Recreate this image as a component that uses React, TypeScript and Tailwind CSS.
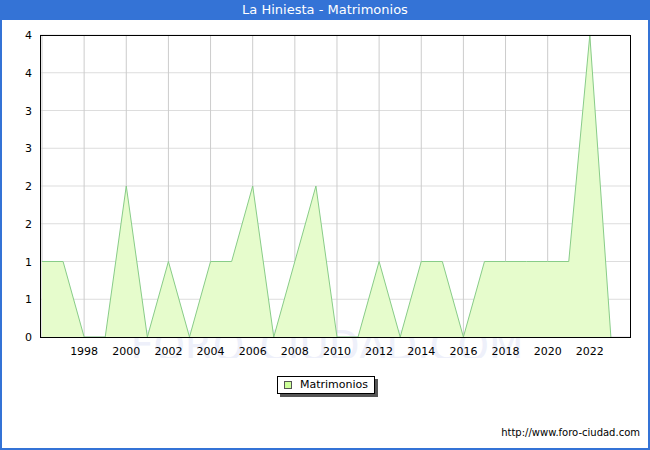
const data = [1,1,0,0,2,0,1,0,1,1,2,0,1,2,0,0,1,0,1,1,0,1,1,1,1,1,4,0];
const X = (i: number) => 40 + i * 21.07;
const Y = (v: number) => 317 - v * 75.5; // svg coords (page y - 20)

export default function App() {
  const pts = data.map((v, i) => `${X(i)},${Y(v)}`).join(" ");
  const area = `${X(0)},${Y(0)} ${pts} ${X(data.length - 1)},${Y(0)}`;
  const yLabels = ["0","1","1","2","2","3","3","4","4"];
  return (
    <div className="w-[650px] h-[450px] bg-[#3473d6] flex flex-col" style={{ fontFamily: '"DejaVu Sans", sans-serif' }}>
      <div className="h-[20px] flex items-center justify-center text-white text-[13px]">La Hiniesta - Matrimonios</div>
      <div className="flex-1 bg-white mx-[2px] mb-[2px] flex flex-col">
        <svg width="646" height="338" className="block">
          <text x="325" y="340" textAnchor="middle" fontSize="40" fill="#eef0fa" fontFamily="DejaVu Sans">FORO-CIUDAD.COM</text>
          {Array.from({ length: 9 }, (_, k) => (
            <line key={k} x1="38" x2="628" y1={Y(k * 0.5)} y2={Y(k * 0.5)} stroke="#dddddd" />
          ))}
          {Array.from({ length: 14 }, (_, k) => (
            <line key={k} x1={X(2 * k)} x2={X(2 * k)} y1="15" y2="317" stroke="#cccccc" />
          ))}
          <polygon points={area} fill="#e6fccc" />
          <polyline points={pts} fill="none" stroke="#88cc88" strokeWidth="1" />
          <rect x="38.5" y="15.5" width="590" height="302" fill="none" stroke="#000" />
          {yLabels.map((l, k) => (
            <text key={k} x="30" y={Y(k * 0.5) + 4} textAnchor="end" fontSize="11" fill="#000">{l}</text>
          ))}
          {Array.from({ length: 13 }, (_, k) => (
            <text key={k} x={X(2 * k + 2)} y="335" textAnchor="middle" fontSize="11" fill="#000">{1998 + 2 * k}</text>
          ))}
        </svg>
        <div className="flex justify-center mt-[18px] pl-[2px]">
          <div className="flex items-center gap-[8px] border border-black bg-white h-[18px] px-[6px] text-[11px] shadow-[3px_3px_0_#555]">
            <span className="w-[8px] h-[8px] border border-[#555] bg-[#ccff99]" />
            <span>Matrimonios</span>
          </div>
        </div>
        <div className="mt-auto mb-[8px] mr-[8px] text-right text-[10px] text-black">http://www.foro-ciudad.com</div>
      </div>
    </div>
  );
}
